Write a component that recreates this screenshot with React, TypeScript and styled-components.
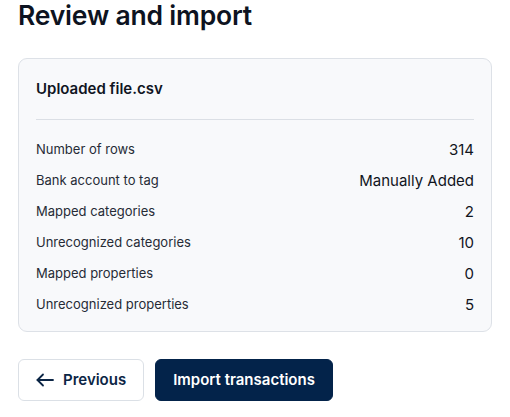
import React from 'react';
import styled, { createGlobalStyle } from 'styled-components';

const GlobalStyle = createGlobalStyle`
	body {
		margin: 0;
		background: #fff;
		font-family: Inter, "Noto Sans", sans-serif;
		color: #0f1729;
	}
`

const Page = styled.div`
	padding: 0 18px;
	width: 474px;
`

const Title = styled.h1`
	margin: 0 0 29px;
	padding-top: 2px;
	font-size: 26.5px;
	line-height: 1;
	font-weight: 600;
	letter-spacing: -0.2px;
	color: #0d1321;
`

const Card = styled.section`
	background: #f8f9fb;
	border: 1px solid #dde1e7;
	border-radius: 9px;
	padding: 0 17px;
`

const CardHeader = styled.h2`
	margin: 0;
	height: 60px;
	display: flex;
	align-items: center;
	font-size: 15px;
	font-weight: 600;
	color: #10151f;
	border-bottom: 1px solid #dbdfe5;
`

const Rows = styled.div`
	padding: 14px 0 11px;
`

const Row = styled.div`
	display: flex;
	justify-content: space-between;
	align-items: center;
	height: 31px;
`

const Label = styled.span`
	font-size: 13px;
	color: #262b36;
`

const Value = styled.span`
	font-size: 15px;
	color: #11151d;
`

const Actions = styled.div`
	display: flex;
	gap: 11px;
	margin-top: 27px;
`

const Button = styled.button<{ $primary?: boolean }>`
	display: flex;
	align-items: center;
	gap: 9px;
	height: 42px;
	padding: 0 17px;
	border-radius: 6px;
	font-family: Inter, "Noto Sans", sans-serif;
	font-size: 15px;
	font-weight: 600;
	cursor: pointer;
	border: 1px solid ${p => p.$primary ? '#03234a' : '#dbe0e6'};
	background: ${p => p.$primary ? '#03234a' : '#fff'};
	color: ${p => p.$primary ? '#fff' : '#0b2545'};
`

const rows: [string, string][] = [
	['Number of rows', '314'],
	['Bank account to tag', 'Manually Added'],
	['Mapped categories', '2'],
	['Unrecognized categories', '10'],
	['Mapped properties', '0'],
	['Unrecognized properties', '5'],
]

const ArrowLeft = () => (
	<svg width="18" height="14" viewBox="0 0 18 14" fill="none" stroke="currentColor" strokeWidth="1.8" strokeLinecap="round" strokeLinejoin="round">
		<path d="M17 7H1.5" />
		<path d="M7 1.5L1.5 7L7 12.5" />
	</svg>
)

const App: React.FC = () => {
	return (
		<Page>
			<GlobalStyle />
			<Title>Review and import</Title>
			<Card>
				<CardHeader>Uploaded file.csv</CardHeader>
				<Rows>
					{rows.map(([label, value]) => (
						<Row key={label}>
							<Label>{label}</Label>
							<Value>{value}</Value>
						</Row>
					))}
				</Rows>
			</Card>
			<Actions>
				<Button><ArrowLeft />Previous</Button>
				<Button $primary>Import transactions</Button>
			</Actions>
		</Page>
	)
}

export default App;
